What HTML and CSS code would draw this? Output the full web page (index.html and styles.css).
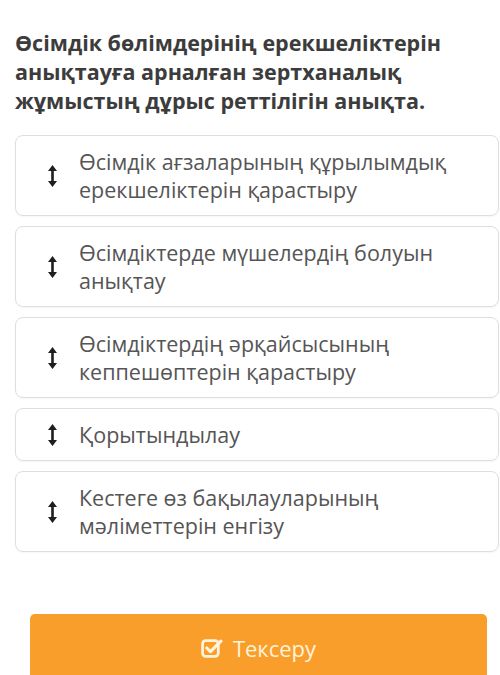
FILE: index.html
```html
<!DOCTYPE html>
<html lang="kk">
  <head>
    <meta charset="UTF-8" />
    <meta name="viewport" content="width=device-width, initial-scale=1.0" />
    <title>Реттілік</title>
    <link rel="stylesheet" href="styles.css">
  </head>
  <body>
    <div class="quiz">
      <h1 class="question">Өсімдік бөлімдерінің ерекшеліктерін анықтауға арналған зертханалық жұмыстың дұрыс реттілігін анықта.</h1>

      <ul class="order-list">
        <li class="order-item">
          <span class="handle"><svg width="9" height="22" viewBox="0 0 9 22"><path d="M4.5 0 L9 6 L5.8 6 L5.8 16 L9 16 L4.5 22 L0 16 L3.2 16 L3.2 6 L0 6 Z" fill="#1e1e1e"/></svg></span>
          <span class="item-text">Өсімдік ағзаларының құрылымдық ерекшеліктерін қарастыру</span>
        </li>
        <li class="order-item">
          <span class="handle"><svg width="9" height="22" viewBox="0 0 9 22"><path d="M4.5 0 L9 6 L5.8 6 L5.8 16 L9 16 L4.5 22 L0 16 L3.2 16 L3.2 6 L0 6 Z" fill="#1e1e1e"/></svg></span>
          <span class="item-text">Өсімдіктерде мүшелердің болуын анықтау</span>
        </li>
        <li class="order-item">
          <span class="handle"><svg width="9" height="22" viewBox="0 0 9 22"><path d="M4.5 0 L9 6 L5.8 6 L5.8 16 L9 16 L4.5 22 L0 16 L3.2 16 L3.2 6 L0 6 Z" fill="#1e1e1e"/></svg></span>
          <span class="item-text">Өсімдіктердің әрқайсысының кеппешөптерін қарастыру</span>
        </li>
        <li class="order-item">
          <span class="handle"><svg width="9" height="22" viewBox="0 0 9 22"><path d="M4.5 0 L9 6 L5.8 6 L5.8 16 L9 16 L4.5 22 L0 16 L3.2 16 L3.2 6 L0 6 Z" fill="#1e1e1e"/></svg></span>
          <span class="item-text">Қорытындылау</span>
        </li>
        <li class="order-item">
          <span class="handle"><svg width="9" height="22" viewBox="0 0 9 22"><path d="M4.5 0 L9 6 L5.8 6 L5.8 16 L9 16 L4.5 22 L0 16 L3.2 16 L3.2 6 L0 6 Z" fill="#1e1e1e"/></svg></span>
          <span class="item-text">Кестеге өз бақылауларының мәліметтерін енгізу</span>
        </li>
      </ul>

      <button type="button" class="check-btn">
        <svg width="22" height="20" viewBox="0 0 21 19">
          <rect x="1.5" y="2.5" width="15" height="15" rx="3" fill="none" stroke="#fff3dc" stroke-width="2.6"/>
          <path d="M5.5 9.5 L9 13 L19 3" fill="none" stroke="#fff3dc" stroke-width="3" stroke-linecap="round" stroke-linejoin="round"/>
        </svg>
        Тексеру
      </button>
    </div>
  </body>
</html>
```

FILE: styles.css
```css
body {
  margin: 0;
  padding: 0;
  background-color: #fff;
  font-family: "Open Sans", "Noto Sans", Arial, sans-serif;
}

.quiz {
  padding: 28px 1px 0 15px;
}

.question {
  margin: 0 0 20px;
  font-size: 21.5px;
  line-height: 29px;
  font-weight: 700;
  color: #3c3c3c;
  padding-right: 30px;
}

.order-list {
  list-style: none;
  margin: 0;
  padding: 0;
  display: flex;
  flex-direction: column;
  gap: 10px;
}

.order-item {
  display: flex;
  align-items: center;
  border: 1px solid #dedede;
  border-radius: 8px;
  padding: 12px 20px 11px 0;
  box-shadow: 0 1px 2px rgba(0, 0, 0, 0.04);
}

.handle {
  width: 63px;
  flex-shrink: 0;
  display: flex;
  justify-content: center;
  padding-left: 10px;
  box-sizing: border-box;
}

.handle svg {
  display: block;
}

.item-text {
  font-size: 21.5px;
  line-height: 28px;
  color: #555;
}

.check-btn {
  display: flex;
  align-items: center;
  justify-content: center;
  gap: 10px;
  width: 457px;
  height: 80px;
  margin: 62px 0 0 15px;
  padding: 0 0 12px;
  border: none;
  border-radius: 5px;
  background-color: #fa9e2b;
  color: #fff3dc;
  font-family: "Open Sans", "Noto Sans", Arial, sans-serif;
  font-size: 22px;
  cursor: pointer;
}
```
